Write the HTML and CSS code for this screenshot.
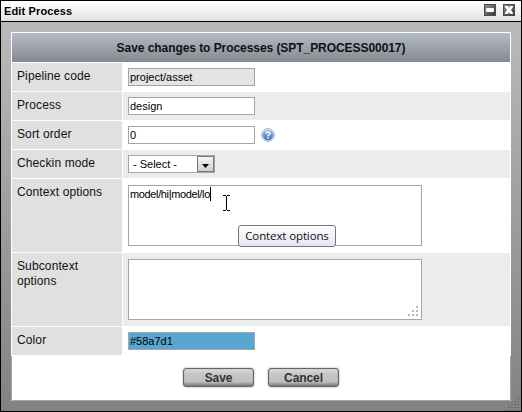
FILE: index.html
```html
<!DOCTYPE html>
<html lang="en">
<head>
<meta charset="utf-8">
<title>Edit Process</title>
<link rel="stylesheet" href="styles.css">
</head>
<body>
<div class="window">
  <div class="titlebar">
    <span class="title">Edit Process</span>
    <svg class="winbtn" width="12" height="12" viewBox="0 0 12 12"><defs><linearGradient id="wb" x2="1" y2="1"><stop stop-color="#929292"/><stop offset="1" stop-color="#353535"/></linearGradient></defs><rect width="12" height="12" fill="#4b4b4b"/><rect x="1" y="1" width="10" height="10" fill="url(#wb)"/><rect x="2" y="4" width="8" height="4" rx="1" fill="#fff"/></svg>
    <svg class="winbtn" width="12" height="12" viewBox="0 0 12 12"><rect width="12" height="12" fill="#4b4b4b"/><rect x="1" y="1" width="10" height="10" fill="url(#wb)"/><path d="M2 2h3l1 2 1-2h3v1L8 6l2 3v1H7L6 8l-1 2H2V9l2-3-2-3z" fill="#fff"/></svg>
  </div>
  <div class="content">
    <div class="panel">
      <div class="heading">Save changes to Processes (SPT_PROCESS00017)</div>
      <div class="row"><div class="label">Pipeline code</div><div class="value"><div class="field disabled">project/asset</div></div></div>
      <div class="row alt"><div class="label">Process</div><div class="value"><div class="field">design</div></div></div>
      <div class="row"><div class="label">Sort order</div><div class="value"><div class="field">0</div>
        <svg class="help" width="14" height="14" viewBox="0 0 14 14"><defs><linearGradient id="hp" x2="0" y2="1"><stop stop-color="#98bce3"/><stop offset="1" stop-color="#3f72b4"/></linearGradient></defs><circle cx="7" cy="7" r="6.4" fill="#e5eef8" stroke="#8caed4" stroke-width=".9"/><circle cx="7" cy="7" r="5.3" fill="url(#hp)"/><path d="M5 5.5C5 3.4 9 3.4 9 5.4 9 6.7 7 6.7 7 8.2M7 9.2v1.5" fill="none" stroke="#fff" stroke-width="1.5"/></svg></div></div>
      <div class="row alt"><div class="label">Checkin mode</div><div class="value"><div class="select"><span>- Select -</span><div class="drop"><svg width="7" height="4" viewBox="0 0 7 4"><path d="M0 0h7L3.5 4z"/></svg></div></div></div></div>
      <div class="row tall"><div class="label">Context options</div><div class="value"><div class="area"><span class="typed">model/hi|model/lo</span><i class="caret"></i></div></div></div>
      <div class="row tall alt"><div class="label">Subcontext<br>options</div><div class="value"><div class="area"><svg class="grip" width="10" height="10" viewBox="0 0 10 10"><path d="M8 0h2v2H8zM4 4h2v2H4zM8 4h2v2H8zM0 8h2v2H0zM4 8h2v2H4zM8 8h2v2H8z" fill="#b9b9b9"/></svg></div></div></div>
      <div class="row"><div class="label">Color</div><div class="value"><div class="field color">#58a7d1</div></div></div>
      <div class="footer"><div class="button">Save</div><div class="button">Cancel</div></div>
    </div>
  </div>
  <div class="tooltip">Context options</div>
  <svg class="cursor" width="7" height="16" viewBox="0 0 7 16" shape-rendering="crispEdges"><path d="M0 0h3v1H0zM4 0h3v1H4zM3 1h1v14H3zM0 15h3v1H0zM4 15h3v1H4z"/></svg>
  <svg class="resize" width="14" height="13" viewBox="0 0 14 13" shape-rendering="crispEdges"><path d="M12 0h2v1h-2zM9 3h2v1H9zM12 3h2v1h-2zM6 6h2v1H6zM9 6h2v1H9zM12 6h2v1h-2zM3 9h2v1H3zM6 9h2v1H6zM9 9h2v1H9zM12 9h2v1h-2zM0 12h2v1H0zM3 12h2v1H3zM6 12h2v1H6zM9 12h2v1H9zM12 12h2v1h-2z" fill="#676767"/></svg>
</div>
</body>
</html>
```
FILE: styles.css
```css
* { box-sizing: border-box; }
body { margin: 0; font-family: "Liberation Sans", Arial, sans-serif; font-size: 12px; color: #111; }
.window { position: relative; width: 522px; height: 412px; border: 1px solid #000; overflow: hidden; display: flex; flex-direction: column; }
.titlebar { height: 21px; flex: none; display: flex; align-items: flex-start; gap: 7px; padding: 3px 6px 0 3px; border-bottom: 1px solid #000; background: linear-gradient(#fff, #e3e3e3); }
.title { flex: 1; font-size: 11px; font-weight: bold; line-height: 15px; letter-spacing: .14px; color: #000; }
.winbtn { display: block; }
.content { flex: 1; padding: 10px; background: linear-gradient(#bababa, #828282); }
.panel { width: 500px; height: 369px; background: #fff; border: 1px solid #fff; border-bottom-color: #a5a5a5; }
.heading { height: 29px; line-height: 31px; text-align: center; font-weight: bold; letter-spacing: -.06px; background: linear-gradient(#b5bcc8, #858991); }
.row { display: flex; gap: 1px; height: 28px; margin-top: 1px; }
.row.tall { height: 73px; }
.label { width: 110px; flex: none; background: #e0e0e0; padding: 6px 5px 5px; line-height: 15px; letter-spacing: .12px; white-space: nowrap; }
.value { flex: 1; display: flex; align-items: flex-start; padding: 5px; }
.tall .value { padding-top: 6px; }
.alt .value { background: #ececec; }
.field { width: 127px; height: 18px; border: 1px solid #a5a5a5; background: #fff; padding-left: 1px; font-size: 11px; line-height: 17px; color: #000; }
.disabled { background: #e4e4e4; }
.color { background: #58a7d1; }
.help { margin: 2px 0 0 6px; }
.select { display: flex; width: 87px; height: 18px; border: 1px solid #a5a5a5; background: #fff; font-size: 11px; line-height: 17px; color: #000; }
.select span { flex: 1; padding-left: 4px; }
.drop { width: 17px; height: 16px; border: 1px solid #777; background: linear-gradient(#f6f6f6, #d0d0d0); display: flex; justify-content: center; padding-top: 7px; }
.area { position: relative; width: 294px; height: 61px; background: #fff; border: 1px solid #a5a5a5; padding: 1px; font-size: 11px; line-height: 14px; color: #000; display: flex; }
.typed { letter-spacing: -.36px; }
.caret { width: 1px; height: 14px; background: #000; }
.grip { position: absolute; right: 3px; bottom: 3px; }
.footer { display: flex; justify-content: center; gap: 14px; height: 44px; margin: 1px -1px 0; padding-top: 12px; border: solid #a5a5a5; border-width: 0 1px; }
.button { width: 71px; height: 19px; border: 1px solid #666; border-radius: 3px; background: linear-gradient(#dadada, #c6c6c6 30%, #c0c0c0 75%, #777); box-shadow: 0 0 2px #999, inset 0 0 1px #777; text-align: center; font-weight: bold; line-height: 19px; letter-spacing: -.1px; color: #333; }
.tooltip { position: absolute; left: 237px; top: 224px; width: 98px; height: 22px; border: 1px solid #767676; border-radius: 3px; background: linear-gradient(#fff, #e4e5f0); text-align: center; font-family: "Open Sans", sans-serif; font-size: 11.5px; letter-spacing: -.12px; line-height: 20px; white-space: nowrap; }
.cursor { position: absolute; left: 222px; top: 194px; }
.resize { position: absolute; right: 2px; bottom: 0; }
```
